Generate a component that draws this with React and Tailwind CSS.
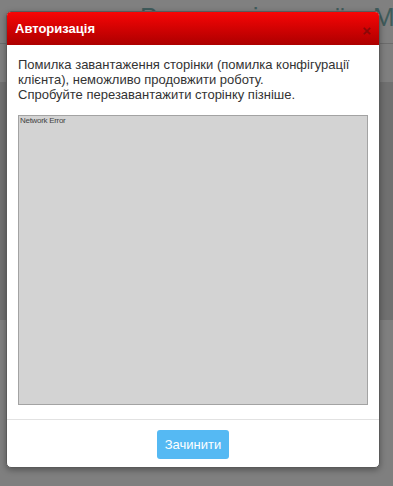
import { useState } from 'react'

const font = { fontFamily: '"Liberation Sans", Arial, sans-serif' }

const App = () => {
  const [open, setOpen] = useState(true)

  return (
    <div className="relative w-[393px] h-[486px] overflow-hidden bg-[#808080]" style={font}>
      {/* page behind the dialog, already dimmed */}
      <div className="h-[44px] border-b border-[#6c6c6c] bg-[#808080] flex items-start whitespace-nowrap overflow-hidden">
        <span className="ml-[140px] mt-[2px] w-[233px] shrink-0 overflow-hidden text-[26px] leading-[30px] text-[#3f5c5c]">
          Реєстрація нової
        </span>
        <span className="mt-[2px] text-[26px] leading-[30px] text-[#3f5c5c]">Ма</span>
      </div>
      <div className="h-[38px] bg-[#7f7f7f]" />
      <div className="h-[238px] bg-[#707070]" />
      <div className="h-[166px] bg-[#7f7f7f]" />

      {open && (
        <div className="absolute left-[6px] top-[11px] w-[374px] h-[457px] flex flex-col bg-white rounded-[5px] border border-[#5a5a5a] shadow-[0_2px_6px_rgba(0,0,0,0.35)] overflow-hidden">
          <div className="h-[33px] shrink-0 flex items-center justify-between pl-[8px] pr-[8px] bg-gradient-to-b from-[#f80606] to-[#ad0000]">
            <span className="text-white font-bold text-[13px] leading-none">Авторизація</span>
            <button
              onClick={() => setOpen(false)}
              className="text-[#7a0a0a] text-[15px] leading-none font-bold mt-[3px] opacity-80"
            >
              ×
            </button>
          </div>

          <div className="flex-1 flex flex-col px-[11px] pt-[12px] pb-[14px]">
            <p className="text-[13px] leading-[15px] text-[#333]">
              Помилка завантаження сторінки (помилка конфігурації клієнта), неможливо продовжити роботу.
              <br />
              Спробуйте перезавантажити сторінку пізніше.
            </p>
            <div className="mt-[13px] h-[290px] bg-[#d3d3d3] border border-[#a3a3a3] px-[1px]">
              <span className="block text-[8px] leading-[10px] text-[#444] tracking-[-0.3px]">Network Error</span>
            </div>
          </div>

          <div className="h-[51px] shrink-0 border-t border-[#e2e2e2] flex justify-center items-start pt-[10px]">
            <button
              onClick={() => setOpen(false)}
              className="h-[29px] w-[72px] rounded-[3px] bg-[#55b9f3] text-white text-[13px] leading-none"
            >
              Зачинити
            </button>
          </div>
        </div>
      )}
    </div>
  )
}

export default App
